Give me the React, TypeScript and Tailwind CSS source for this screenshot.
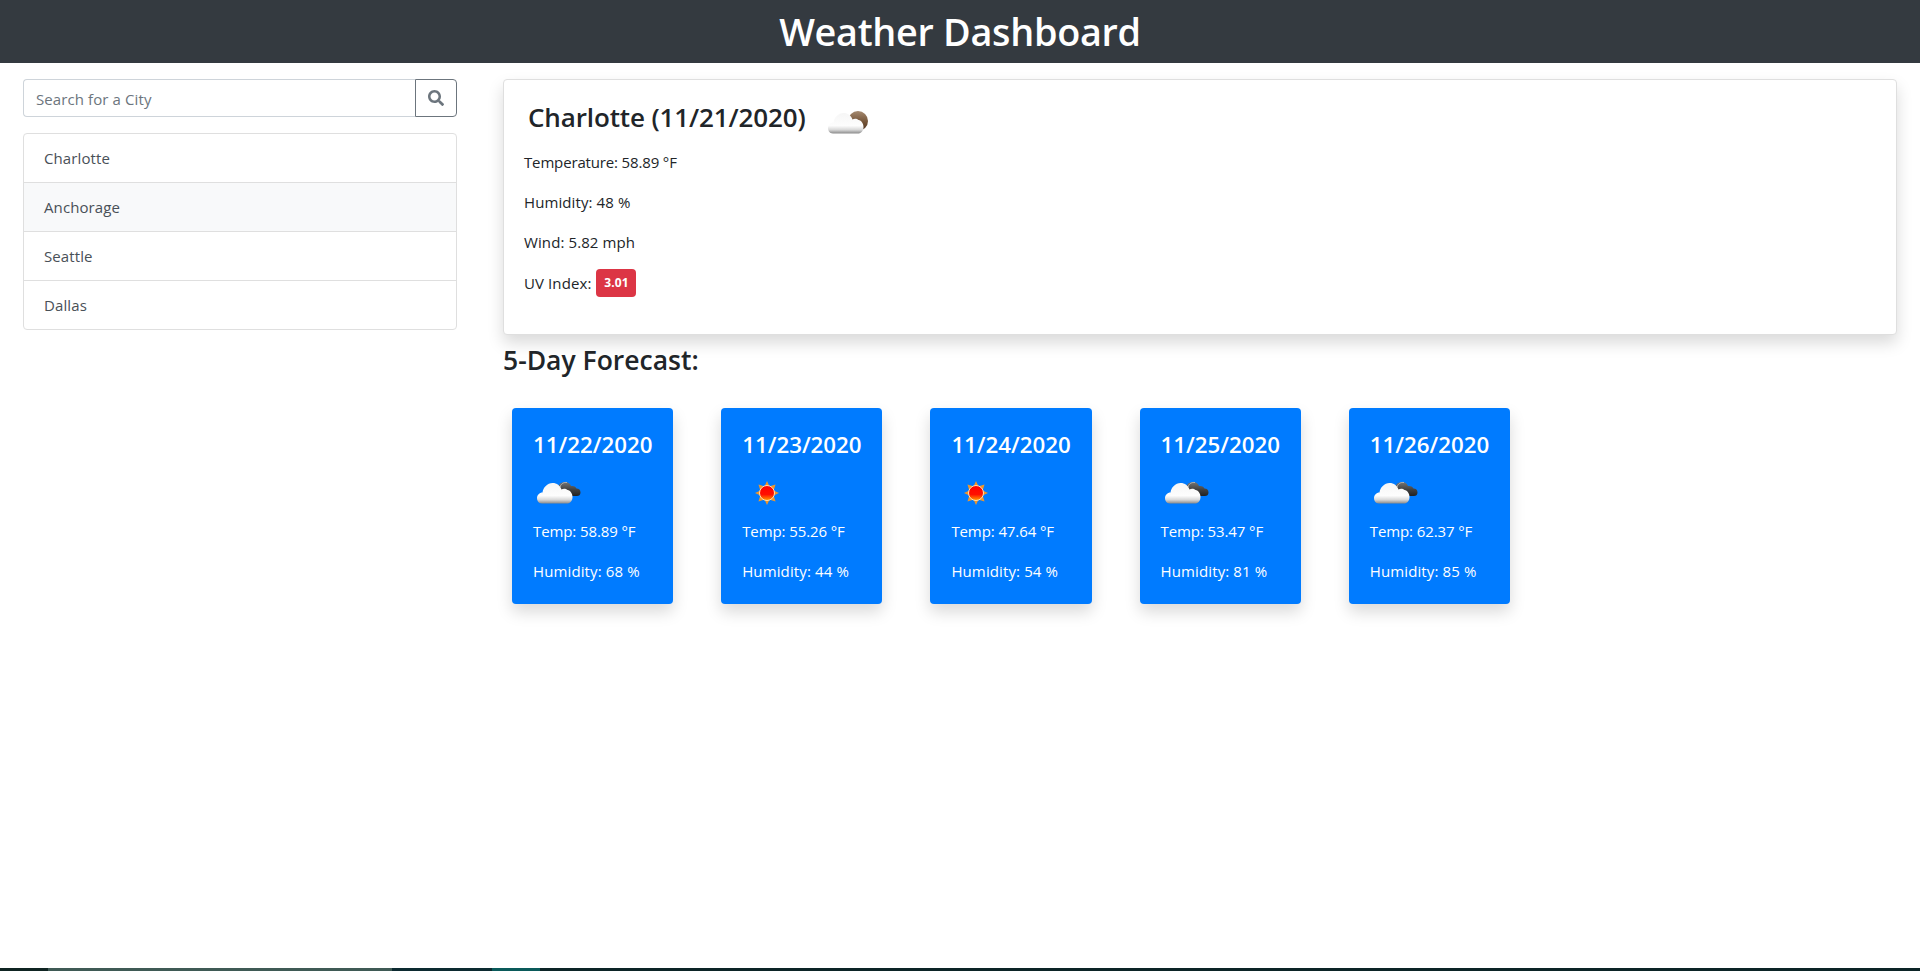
import { FaSearch } from "react-icons/fa";

const font = { fontFamily: '"Open Sans", "Noto Sans", sans-serif' };

function Defs() {
  return (
    <svg width="0" height="0" className="absolute">
      <defs>
        <linearGradient id="cloudWhite" x1="0" y1="0" x2="0" y2="1">
          <stop offset="0" stopColor="#f6f6f6" />
          <stop offset="0.62" stopColor="#fdfdfd" />
          <stop offset="0.82" stopColor="#d8d8d8" />
          <stop offset="1" stopColor="#8a8a8a" />
        </linearGradient>
        <linearGradient id="cloudDark" x1="0" y1="0" x2="0" y2="1">
          <stop offset="0" stopColor="#777777" />
          <stop offset="0.6" stopColor="#3c3c3c" />
          <stop offset="1" stopColor="#222222" />
        </linearGradient>
        <linearGradient id="disc" x1="0" y1="0" x2="0" y2="1">
          <stop offset="0" stopColor="#ff0000" />
          <stop offset="0.6" stopColor="#ff1000" />
          <stop offset="1" stopColor="#ffa000" />
        </linearGradient>
        <linearGradient id="brown" x1="0" y1="0" x2="0" y2="1">
          <stop offset="0" stopColor="#a58a70" />
          <stop offset="0.6" stopColor="#6f4f33" />
          <stop offset="1" stopColor="#4f3524" />
        </linearGradient>
      </defs>
    </svg>
  );
}

const whiteCloud =
  "M9 35.5 C5 35.5 4 32 4 30 C4 27 6.5 24.5 9.5 24.5 C10 19.5 14.5 15 19.5 15 C24 15 27 17.5 28.5 21.5 C30 20.5 33 20.5 34.5 22 C37.5 22.5 39.5 25.5 39.5 29 C39.5 33 37 35.5 34 35.5 Z";

function HeroIcon() {
  return (
    <svg viewBox="0 0 50 50" className="w-[50px] h-[50px] block">
      <circle cx="37" cy="23" r="10" fill="url(#brown)" />
      <path d={whiteCloud} transform="translate(3 0)" fill="url(#cloudWhite)" />
    </svg>
  );
}

function CloudsIcon() {
  return (
    <svg viewBox="0 0 50 50" className="w-[50px] h-[50px] block">
      <path d="M28 28 C24 22 24 15 31 14 C34 13.5 37 15 38 18 C41 17.5 43 19 43.5 20.5 C46 20.5 47.5 22 47.5 24.5 C47.5 27 46 28 44 28 Z" fill="url(#cloudDark)" />
      <path d="M27 19 C28 15.5 31 14 34 14.5" fill="none" stroke="#b5b5b5" strokeWidth="1" />
      <path d={whiteCloud} fill="url(#cloudWhite)" />
    </svg>
  );
}

function SunIcon() {
  return (
    <svg viewBox="0 0 50 50" className="w-[50px] h-[50px] block">
      <g fill="#f0962a">
        <path d="M25 13 L28 19.5 L22 19.5 Z" />
        <path d="M25 37 L28 30.5 L22 30.5 Z" />
        <path d="M13 25 L19.5 22 L19.5 28 Z" />
        <path d="M37 25 L30.5 22 L30.5 28 Z" />
        <path d="M16.5 16.5 L23 18.5 L18.5 23 Z" />
        <path d="M33.5 16.5 L27 18.5 L31.5 23 Z" />
        <path d="M16.5 33.5 L23 31.5 L18.5 27 Z" />
        <path d="M33.5 33.5 L27 31.5 L31.5 27 Z" />
      </g>
      <circle cx="25" cy="25" r="7.5" fill="url(#disc)" stroke="#ffe2b8" strokeWidth="1" />
    </svg>
  );
}

const cities = ["Charlotte", "Anchorage", "Seattle", "Dallas"];

const days = [
  { date: "11/22/2020", icon: "clouds", temp: "58.89", hum: "68" },
  { date: "11/23/2020", icon: "sun", temp: "55.26", hum: "44" },
  { date: "11/24/2020", icon: "sun", temp: "47.64", hum: "54" },
  { date: "11/25/2020", icon: "clouds", temp: "53.47", hum: "81" },
  { date: "11/26/2020", icon: "clouds", temp: "62.37", hum: "85" },
];

export default function App() {
  return (
    <div style={font} className="min-h-[971px] flex flex-col bg-white text-[#212529] text-[15px] leading-[24px]">
      <Defs />
      <header className="h-[63px] pt-[1px] bg-[#343a40] flex items-center justify-center shrink-0">
        <h1 className="text-[37.8px] leading-[62px] font-semibold text-white tracking-[-0.3px]">Weather Dashboard</h1>
      </header>

      <div className="flex flex-1">
        <aside className="w-[480px] shrink-0 px-[23px] pt-[16px]">
          <div className="flex h-[38px]">
            <input
              placeholder="Search for a City"
              className="flex-1 min-w-0 h-[38px] px-[12px] pt-[2px] tracking-[0.1px] border border-[#ced4da] border-r-0 rounded-l-[4px] outline-none placeholder:text-[#6c757d] text-[#495057]"
            />
            <button className="w-[42px] h-[38px] shrink-0 border border-[#6c757d] rounded-r-[4px] flex items-center justify-center text-[#6c757d]">
              <FaSearch className="w-[16px] h-[16px]" />
            </button>
          </div>
          <ul className="mt-[16px] border border-[#dfdfdf] rounded-[4px] text-[#495057] tracking-[0.1px]">
            {cities.map((c, i) => (
              <li
                key={c}
                className={
                  i === 1
                    ? "h-[49px] px-[20px] flex items-center bg-[#f8f9fa] border-t border-[#dfdfdf]"
                    : i === 0
                      ? "h-[48px] px-[20px] flex items-center"
                      : "h-[49px] px-[20px] flex items-center border-t border-[#dfdfdf]"
                }
              >
                {c}
              </li>
            ))}
          </ul>
        </aside>

        <main className="flex-1 min-w-0 px-[23px] pt-[16px]">
          <section className="h-[256px] border border-[#dfdfdf] rounded-[4px] bg-white shadow-[0_8px_16px_rgba(0,0,0,0.15)] px-[20px] pt-[13px]">
            <div className="flex h-[50px]">
              <h3 className="ml-[4px] mt-[7px] text-[26px] leading-[34px] font-semibold tracking-[-0.13px]">Charlotte (11/21/2020)</h3>
              <span className="ml-[15px] mt-[5px]"><HeroIcon /></span>
            </div>
            <p className="mt-[7px] tracking-[-0.15px]">Temperature: 58.89 °F</p>
            <p className="mt-[16px] tracking-[0.1px]">Humidity: 48 %</p>
            <p className="mt-[16px] tracking-[0.1px]">Wind: 5.82 mph</p>
            <p className="mt-[13px] flex items-center h-[32px] tracking-[0.1px]">
              UV Index:
              <span className="ml-[5px] w-[40px] h-[28px] rounded-[4px] bg-[#dc3545] text-white text-[12px] font-bold flex items-center justify-center">3.01</span>
            </p>
          </section>

          <h3 className="mt-[8px] h-[34px] text-[26.5px] leading-[34px] font-semibold">5-Day Forecast:</h3>

          <div className="mt-[31px] ml-[9px] flex gap-[48px]">
            {days.map((d) => (
              <article key={d.date} className="w-[161.2px] h-[196px] rounded-[4px] bg-[#007bff] text-white shadow-[0_8px_16px_rgba(0,0,0,0.15)] pl-[21px] pt-[22px]">
                <h4 className="text-[22.3px] leading-[29px] font-semibold whitespace-nowrap">{d.date}</h4>
                <div className="mt-[9px]">{d.icon === "sun" ? <SunIcon /> : <CloudsIcon />}</div>
                <p className="mt-[1px] tracking-[-0.1px]">Temp: {d.temp} °F</p>
                <p className="mt-[16px] tracking-[0.12px]">Humidity: {d.hum} %</p>
              </article>
            ))}
          </div>
        </main>
      </div>

      <footer className="h-[3px] flex shrink-0 bg-[#0c2426]">
        <div className="w-[48px] bg-[#0f2422]" />
        <div className="w-[344px] bg-[#3f5a55]" />
        <div className="w-[100px] bg-[#0c2a30]" />
        <div className="w-[48px] bg-[#0a5a5a]" />
      </footer>
    </div>
  );
}
